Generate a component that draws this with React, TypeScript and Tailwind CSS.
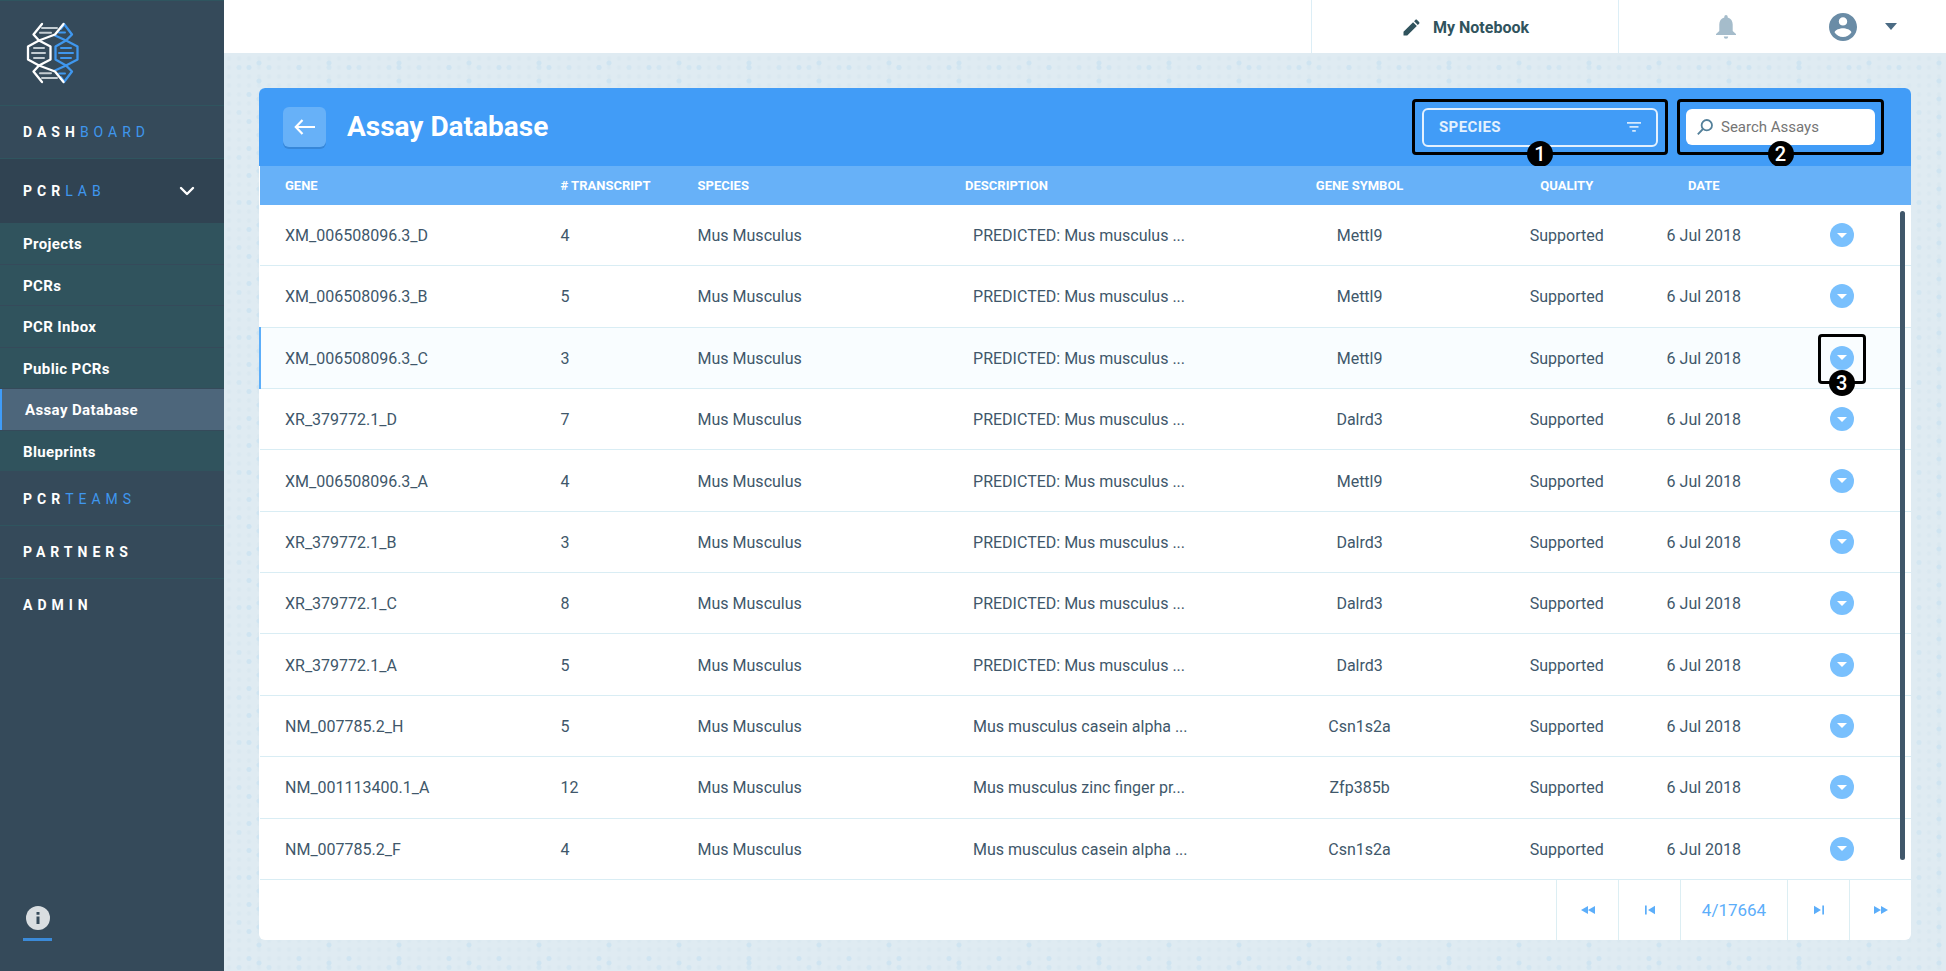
import React from "react";

type Assay = {
  gene: string;
  transcript: number;
  description: string;
  symbol: string;
};

const assays: Assay[] = [
  { gene: "XM_006508096.3_D", transcript: 4, description: "PREDICTED: Mus musculus ...", symbol: "Mettl9" },
  { gene: "XM_006508096.3_B", transcript: 5, description: "PREDICTED: Mus musculus ...", symbol: "Mettl9" },
  { gene: "XM_006508096.3_C", transcript: 3, description: "PREDICTED: Mus musculus ...", symbol: "Mettl9" },
  { gene: "XR_379772.1_D", transcript: 7, description: "PREDICTED: Mus musculus ...", symbol: "Dalrd3" },
  { gene: "XM_006508096.3_A", transcript: 4, description: "PREDICTED: Mus musculus ...", symbol: "Mettl9" },
  { gene: "XR_379772.1_B", transcript: 3, description: "PREDICTED: Mus musculus ...", symbol: "Dalrd3" },
  { gene: "XR_379772.1_C", transcript: 8, description: "PREDICTED: Mus musculus ...", symbol: "Dalrd3" },
  { gene: "XR_379772.1_A", transcript: 5, description: "PREDICTED: Mus musculus ...", symbol: "Dalrd3" },
  { gene: "NM_007785.2_H", transcript: 5, description: "Mus musculus casein alpha ...", symbol: "Csn1s2a" },
  { gene: "NM_001113400.1_A", transcript: 12, description: "Mus musculus zinc finger pr...", symbol: "Zfp385b" },
  { gene: "NM_007785.2_F", transcript: 4, description: "Mus musculus casein alpha ...", symbol: "Csn1s2a" },
];

const highlighted = 2;
const labLinks = ["Projects", "PCRs", "PCR Inbox", "Public PCRs", "Assay Database", "Blueprints"];

function Logo() {
  return (
    <svg viewBox="0 0 54 62" className="h-[62px] w-[54px]" fill="none" strokeWidth="2.300" strokeLinecap="round" strokeLinejoin="round" aria-label="PCR logo">
      <g stroke="#c3ccd2" strokeWidth="2">
        <path d="M16 6H31M14 10.800H25M8 26H18M6 31H19M8 36H18M14 51.200H25M16 56H31" />
      </g>
      <g stroke="#3f97ee">
        <path d="M38 2L46 12.500L40 18.500L29.500 24.500V37.500L40 43.500L46 49.500L38 60" />
        <path d="M29 13.500L40 18.500L51.500 24.500V37.500L40 43.500L29 48.500" />
        <path d="M33 10.500H39M35 26H45M33 31H47M35 36H45M33 51.500H39M35 7L38 3M35 55L38 59" strokeWidth="2" />
      </g>
      <g stroke="#ffffff">
        <path d="M16 2L7.500 12.500L13 18.500L24.500 24.500V37.500L13 43.500L7.500 49.500L16 60" />
        <path d="M37.500 2L29 12.500L13 18.500L2 24.500V37.500L13 43.500L29 49.500L37.500 60" />
      </g>
    </svg>
  );
}

function Marker({ n }: { n: number }) {
  return (
    <span className="absolute -bottom-[15px] left-1/2 flex size-[26px] -translate-x-1/2 items-center justify-center rounded-full bg-black text-xl leading-none font-medium text-white">
      {n}
    </span>
  );
}

function NavLink({ strong, light, className }: { strong: string; light?: string; className: string }) {
  return (
    <a href="#" className={`flex items-center px-[23px] text-sm font-bold tracking-[5px] ${className}`}>
      {strong}
      {light && <span className="font-normal text-[#3f97ee]">{light}</span>}
    </a>
  );
}

function Sidebar() {
  return (
    <aside className="flex w-56 shrink-0 flex-col bg-[#354a5a] text-white">
      <a href="#" className="flex h-[105px] items-center border-t border-[#2f555f] px-[26px]">
        <Logo />
      </a>
      <nav className="flex flex-col">
        <NavLink strong="DASH" light="BOARD" className="h-[53px] border-t border-[#2f555f]" />
        <div className="flex h-[65px] items-center justify-between border-t border-[#2f555f] bg-[#304352] pr-[29px]">
          <NavLink strong="PCR" light="LAB" className="h-full" />
          <button type="button" aria-label="Toggle PCR Lab">
            <svg viewBox="0 0 16 10" className="h-[10px] w-4" fill="none" stroke="#fff" strokeWidth="2.400" strokeLinecap="round" strokeLinejoin="round">
              <path d="M2 2L8 8L14 2" />
            </svg>
          </button>
        </div>
        <ul className="flex h-[249px] flex-col bg-[#30535d]">
          {labLinks.map((label) => (
            <li key={label} className="flex-1 border-b border-[#354a5a]">
              <a
                href="#"
                className={
                  label === "Assay Database"
                    ? "flex h-full items-center border-l-2 border-[#3f9cf8] bg-[#4d667b] px-[23px] pt-[2px] text-[15px] font-bold tracking-wide"
                    : "flex h-full items-center px-[23px] pt-[2px] text-[15px] font-bold tracking-wide"
                }
              >
                {label}
              </a>
            </li>
          ))}
        </ul>
        <NavLink strong="PCR" light="TEAMS" className="h-[53px]" />
        <NavLink strong="PARTNERS" className="h-[53px] border-t border-[#2f555f]" />
        <NavLink strong="ADMIN" className="h-[53px] border-t border-[#2f555f]" />
      </nav>
      <a href="#" aria-label="Information" className="mt-auto mb-[30px] ml-[23px] flex w-[29px] flex-col items-center gap-2">
        <svg viewBox="0 0 24 24" className="size-6">
          <circle cx="12" cy="12" r="12" fill="#d9dee1" />
          <path d="M10.500 10.500h3V18h-3zM10.500 6h3v2.800h-3z" fill="#354a5a" />
        </svg>
        <span className="h-[3px] w-full bg-[#3b8ad8]" />
      </a>
    </aside>
  );
}

function TopBar() {
  return (
    <header className="flex h-[53px] shrink-0 justify-end bg-white">
      <a href="#" className="flex w-[308px] items-center justify-center gap-3 border-x border-[#dceef6] pt-[2px] text-base font-bold text-[#30535d]">
        <svg viewBox="0 0 24 24" className="size-5" fill="currentColor">
          <path d="M3 21v-4.500L14.500 5l4.500 4.500L7.500 21zM15.700 3.800l1.500-1.500c.6-.6 1.500-.6 2.100 0l2.400 2.400c.6.600.6 1.500 0 2.100l-1.500 1.500z" />
        </svg>
        My Notebook
      </a>
      <div className="flex w-[327px] items-center pl-[97px]">
        <button type="button" aria-label="Notifications">
          <svg viewBox="0 0 20 24" className="h-6 w-5" fill="#a5bccb">
            <path d="M10 0a1.700 1.700 0 0 0-1.700 1.700v.7C5 3.200 3.300 6 3.300 9.500V16L0 19v1h20v-1l-3.300-3V9.500c0-3.500-1.700-6.300-5-7.100v-.7A1.700 1.700 0 0 0 10 0zM7.800 21.500a2.200 2.200 0 0 0 4.400 0z" />
          </svg>
        </button>
        <button type="button" aria-label="Account" className="ml-[93px] flex items-center gap-7">
          <svg viewBox="2 2 20 20" className="size-7" fill="#6a8ca6">
            <path d="M12 2C6.480 2 2 6.480 2 12s4.480 10 10 10 10-4.480 10-10S17.520 2 12 2zm0 3c1.660 0 3 1.340 3 3s-1.340 3-3 3-3-1.340-3-3 1.340-3 3-3zm0 14.200c-2.500 0-4.710-1.280-6-3.220.03-1.990 4-3.080 6-3.080 1.990 0 5.970 1.090 6 3.080-1.290 1.940-3.500 3.220-6 3.220z" />
          </svg>
          <svg viewBox="0 0 12 7" className="h-[7px] w-3" fill="#4b6b84">
            <path d="M0 0h12L6 7z" />
          </svg>
        </button>
      </div>
    </header>
  );
}

function PageButton({ label, d }: { label: string; d: string }) {
  return (
    <button type="button" aria-label={label} className="flex w-[62px] items-center justify-center border-l border-[#dceef3]">
      <svg viewBox="0 0 14 10" className="h-[10px] w-[14px]" fill="currentColor">
        <path d={d} />
      </svg>
    </button>
  );
}

export default function App() {
  return (
    <div className="flex h-screen min-h-[820px] font-['Roboto',sans-serif]">
      <Sidebar />
      <div className="flex min-w-0 flex-1 flex-col bg-[#dfebf2] bg-[radial-gradient(circle,#cfe4f1_2px,transparent_3px),radial-gradient(circle,#cfe4f1_2px,transparent_3px),radial-gradient(circle,#d3e6f1_2px,transparent_3px),radial-gradient(circle,#dae8f0_1px,transparent_3px)] bg-[size:50px_27px,70px_18px,30px_45px,10px_9px]">
        <TopBar />
        <main className="flex min-h-0 flex-1 flex-col px-[35px] pt-[35px] pb-[31px]">
          <section className="flex min-h-0 flex-1 flex-col overflow-hidden rounded-md bg-white">
            <div className="flex h-[78px] shrink-0 items-center bg-[#419cf7] pr-[27px] pl-6">
              <button type="button" aria-label="Back" className="flex h-10 w-[43px] items-center justify-center rounded-md bg-[#67b1f8] shadow-[0_2px_0_#3687d9]">
                <svg viewBox="0 0 22 16" className="h-4 w-[22px]" fill="none" stroke="#fff" strokeWidth="2.200">
                  <path d="M21 8H2M8.500 1L1.800 8L8.500 15" />
                </svg>
              </button>
              <h1 className="ml-[21px] text-[28px] font-bold text-white">Assay Database</h1>
              <div className="relative ml-auto flex h-14 w-[256px] items-center rounded-sm border-[3px] border-black px-[7px]">
                <button type="button" className="flex h-[39px] w-full items-center justify-between rounded-md border-2 border-[#e4f1fe] px-[15px] text-[15px] font-bold tracking-wide text-[#e4f1fe]">
                  SPECIES
                  <svg viewBox="0 0 14 10" className="h-[10px] w-[14px]" fill="#d5e9fd">
                    <path d="M0 0h14v1.700H0zM2.500 4h9v1.700h-9zM5.200 8h3.600v1.700H5.200z" />
                  </svg>
                </button>
                <Marker n={1} />
              </div>
              <div className="relative ml-[9px] flex h-14 w-[207px] items-center rounded-sm border-[3px] border-black px-[6px]">
                <label className="flex h-9 w-full items-center gap-2 rounded-md bg-white px-[11px]">
                  <svg viewBox="0 0 16 16" className="size-4 shrink-0" fill="none" stroke="#54809a" strokeWidth="1.800">
                    <circle cx="9.800" cy="6.200" r="5.200" />
                    <path d="M6 10L.8 15.300" />
                  </svg>
                  <input type="text" aria-label="Search Assays" placeholder="Search Assays" className="w-full min-w-0 text-[15px] outline-none placeholder:text-[#757575]" />
                </label>
                <Marker n={2} />
              </div>
            </div>
            <div className="relative min-h-0 flex-1">
              <table className="h-full w-full table-fixed border-collapse text-left text-base text-[#40576a]">
                <thead className="bg-[#67b1f8] text-[13px] text-white">
                  <tr className="h-[39px]">
                    <th className="pl-[25px]">GENE</th>
                    <th className="w-[8.3%]"># TRANSCRIPT</th>
                    <th className="w-[15.9%]">SPECIES</th>
                    <th className="w-[15.8%] pl-[5px]">DESCRIPTION</th>
                    <th className="w-[16.8%] text-center">GENE SYMBOL</th>
                    <th className="w-[8.3%] text-center">QUALITY</th>
                    <th className="w-[8.3%] text-center">DATE</th>
                    <th className="w-[8.4%]" aria-label="Actions" />
                  </tr>
                </thead>
                <tbody>
                  {assays.map((a, i) => (
                    <tr
                      key={a.gene}
                      className={
                        i === highlighted
                          ? "border-b border-[#d9edf4] bg-[#f9fdff] *:pt-[2px]"
                          : "border-b border-[#d9edf4] *:pt-[2px]"
                      }
                    >
                      <td className={i === highlighted ? "border-l-2 border-l-[#5caefa] pl-6" : "pl-[25px]"}>{a.gene}</td>
                      <td>{a.transcript}</td>
                      <td>Mus Musculus</td>
                      <td className="pl-[13px] whitespace-nowrap">{a.description}</td>
                      <td className="text-center">{a.symbol}</td>
                      <td className="text-center">Supported</td>
                      <td className="text-center">6 Jul 2018</td>
                      <td>
                        <div className="relative mx-auto flex h-[50px] w-12 items-start justify-center pt-3">
                          <button type="button" aria-label={`Actions for ${a.gene}`} className="flex size-6 items-center justify-center rounded-full bg-[#79c0fd]">
                            <svg viewBox="0 0 10 5" className="h-[5px] w-[10px]" fill="#fff">
                              <path d="M0 0h10L5 5z" />
                            </svg>
                          </button>
                          {i === highlighted && (
                            <span className="absolute inset-0 rounded-sm border-[3px] border-black">
                              <Marker n={3} />
                            </span>
                          )}
                        </div>
                      </td>
                    </tr>
                  ))}
                </tbody>
              </table>
              <div className="absolute top-[45px] right-[6px] bottom-5 w-[5px] rounded-full bg-[#40576a]" />
            </div>
            <div className="flex h-[60px] shrink-0 justify-end text-[#5caefa]">
              <PageButton label="Fast backward" d="M7 1v8L0 5zM14 1v8L7 5z" />
              <PageButton label="Previous page" d="M2 .5h1.700v9H2zM12 .8v8.400L5 5z" />
              <span className="flex w-[107px] items-center justify-center border-l border-[#dceef3] pt-[2px] text-[17px]">4/17664</span>
              <PageButton label="Next page" d="M2 .8v8.400L9 5zM10.300 .5H12v9h-1.700z" />
              <PageButton label="Fast forward" d="M0 1v8l7-4zM7 1v8l7-4z" />
            </div>
          </section>
        </main>
      </div>
    </div>
  );
}
